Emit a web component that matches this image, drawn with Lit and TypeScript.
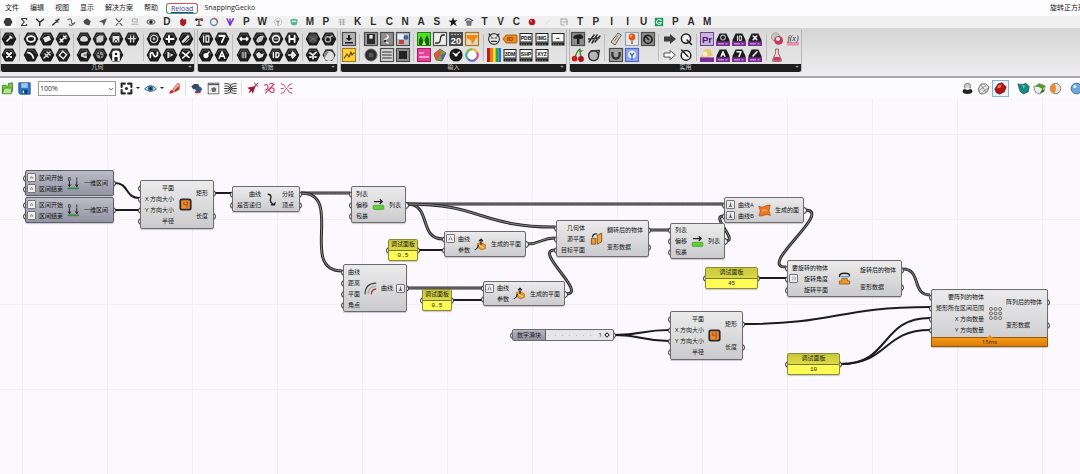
import { LitElement, html, svg, css, nothing, type SVGTemplateResult } from "lit";
import { customElement, property } from "lit/decorators.js";
import { classMap } from "lit/directives/class-map.js";

type Art = SVGTemplateResult;

/* ---------- icon drawing helpers, all on a 16 x 16 box ---------- */

const icon = (art: Art, cls = "i16") =>
  html`<svg class=${cls} viewBox="0 0 16 16" aria-hidden="true">${art}</svg>`;

const line = (d: string, c = "#fff", w = 1.6): Art =>
  svg`<path d=${d} fill="none" stroke=${c} stroke-width=${w} stroke-linecap="round" stroke-linejoin="round"></path>`;
const fill = (d: string, c = "#fff"): Art => svg`<path d=${d} fill=${c}></path>`;

const hex = (glyph: Art): Art => svg`
  <path d="M1.4 8 4.6 2.2H11.4L14.6 8 11.4 13.8H4.6Z" fill="#1c1c1c" stroke="#1c1c1c" stroke-width="1.4" stroke-linejoin="round"></path>
  <path d="M2.8 7.4 5.4 3.2H10.6L12.8 7" fill="none" stroke="#6d6d6d" stroke-width=".7"></path>${glyph}`;

const tile = (glyph: Art, bg = "#9b9b9b", edge = "#4c4c4c"): Art => svg`
  <rect x="1.5" y="1.5" width="13" height="13" fill=${bg} stroke=${edge} stroke-width="1.2"></rect>${glyph}`;

const label = (t: string, size: number, c: string, y = 11): Art =>
  svg`<text x="8" y=${y} text-anchor="middle" font-family="Liberation Sans, sans-serif" font-weight="700" font-size=${size} fill=${c}>${t}</text>`;

const card = (t: string): Art => svg`
  <rect x="2" y="2.5" width="12" height="8.5" fill="#f4f4f4" stroke="#222" stroke-width="1"></rect>
  ${label(t, 5, "#111", 8.6)}
  <path d="M1.5 13H14.5" stroke="#222" stroke-width="3"></path><path d="M3.5 12.4V14.4M6 12.4V14.4M8.5 12.4V14.4M11 12.4V14.4" stroke="#999" stroke-width=".7"></path>`;

const legacy = (glyph: Art): Art => svg`
  <path d="M1.5 9 4.6 2.4H11.4L14.5 9V11H1.5Z" fill="#1c1c1c"></path>
  <rect x="1" y="10.4" width="14" height="4.6" fill="#7a2d94"></rect>
  <path d="M3 12.8H9M10.5 12.8H12.5" stroke="#d9b6e6" stroke-width="1"></path>${glyph}`;

/* ---------- ribbon content ---------- */

interface RibbonPanel { name: string; cls: string; groups: Art[][]; }

const panels: RibbonPanel[] = [
  {
    name: "几何", cls: "p1",
    groups: [
      [hex(line("M6 10 10 6M9 5.4 10.8 7")), hex(line("M6 6 10 10M10 6 6 10", "#fff", 2))],
      [
        hex(svg`<ellipse cx="8" cy="8" rx="4" ry="2.8" fill="none" stroke="#fff" stroke-width="1.7"></ellipse>`),
        hex(fill("M4 7 10 4.6 12 9 6 11.4Z", "#e8e8e8")),
        hex(line("M5 11 11 5M5.4 8.4 7.6 10.6M8.6 5.2 10.8 7.4")),
        hex(line("M5 5.6Q9 6 10.4 11", "#fff", 1.8)),
        hex(line("M5 11 11 5M6 7 9 10M8 5 11 8", "#d5d5d5")),
        hex(svg`<rect x="5.4" y="5.4" width="5.2" height="5.2" transform="rotate(40 8 8)" fill="none" stroke="#eee" stroke-width="1.4"></rect>`),
      ],
      [
        hex(fill("M4 9.6Q4 5 8 5T12 9.6Q8 12 4 9.6", "#dadada")),
        hex(fill("M4.4 6.4 7 4.6H11.4V9.6L9 11.4H4.4Z", "#cfcfcf")),
        hex(svg`${fill("M4.6 5H11.4V11.4H4.6Z", "#e5e5e5")}${line("M6 11Q8 5 10 11", "#333", 1)}`),
        hex(line("M4.4 7.6H11.6M6.6 5V11M9.6 5V11", "#ddd", 1.4)),
        hex(svg`${fill("M10.8 4.4V11.6L5 9.4V6.6Z", "#dcdcdc")}${line("M8 8H10.8", "#333", 1)}`),
        hex(svg`<circle cx="8" cy="8" r="3.6" fill="#8c8c8c"></circle>${line("M5 7 11 9M7 4.8 9 11", "#222", .8)}`),
        hex(svg`${fill("M4.2 14V6.4Q4.2 3.6 8 3.6T11.8 6.4V14H9.6V10H6.4V14Z", "#fff")}<circle cx="8" cy="7" r="1.3" fill="#222"></circle>`),
      ],
      [
        hex(svg`<circle cx="8" cy="8" r="3.6" fill="none" stroke="#ccc" stroke-width="1.4"></circle><circle cx="8" cy="8" r="1.4" fill="#bbb"></circle>`),
        hex(line("M4.4 8H11.6M7 5V11", "#fff", 2)),
        hex(svg`${line("M5 10.6 10 5.4", "#ddd", 2.6)}${line("M8 11.4 11.4 8", "#ddd", 1)}`),
        hex(line("M4.4 10.6V7Q6 4 7.4 7.6T11.4 8.4V5.2")),
        hex(svg`${fill("M5.4 4.4 11.4 8 5.4 11.6Z", "#e6e6e6")}${line("M8 6V10", "#333", 1)}`),
        hex(line("M4.8 5.6 11 10.4M11 5 8 8 4.8 11", "#fff", 1.7)),
      ],
    ],
  },
  {
    name: "初始", cls: "p2",
    groups: [
      [
        hex(line("M5.6 5V11M8 5H10.8V11H8Z", "#eee", 1.3)), hex(line("M5.4 5H10.6L7.8 11.2", "#fff", 1.8)),
        hex(svg`<circle cx="8" cy="8.6" r="2.6" fill="#fff"></circle>${line("M8 8.6 11 5")}`), hex(line("M5.2 11.2 8 4.8 10.8 11.2M6.4 9.2H9.6", "#fff", 1.5)),
      ],
      [
        hex(line("M4 8H12M5.4 6.6 4 8 5.4 9.4M10.6 6.6 12 8 10.6 9.4", "#fff", 1.5)), hex(fill("M4 10Q6 4 12 5L10 10 6 12Z", "#c9c9c9")),
        hex(svg`<circle cx="8" cy="8" r="3.4" fill="none" stroke="#eee" stroke-width="1.6"></circle>${line("M6.6 8H9.4", "#eee", 1)}`), hex(line("M5.4 5V11M10.6 5V11M5.4 8H10.6", "#fff", 1.8)),
        hex(line("M5.6 6H10.4M5.6 8H10.4M5.6 10H10.4M7 5V11M9.4 5V11", "#bbb", .9)), hex(fill("M4 7 7 4.8 9 7 12 6.4 10.6 10 7 11.6 5 10Z", "#e4e4e4")),
        hex(line("M5.4 5.4V10.6M8 5.4Q11.6 5.4 11 8T8 10.6Z", "#eee", 1.5)), hex(line("M4.6 8H11.4M8.6 5 11.4 8 8.6 11M8 6V10", "#fff", 1.5)),
      ],
      [
        hex(svg`<circle cx="8" cy="8" r="4.4" fill="#4a4a4a"></circle>${line("M5 6 11 10M5 10 11 6", "#777", .8)}`), hex(svg`<circle cx="7" cy="8.4" r="2.6" fill="none" stroke="#aaa" stroke-width="1.4"></circle>${line("M9 7Q10 4.6 11.4 5", "#ccc", 1.2)}`),
        hex(line("M5 6 8 8 11 5.4M8 8V11.6M5 10H6M10 10H11", "#e2e2e2", 1.9)), svg`<path d="M1.4 8 4.6 2.2H11.4L14.6 8 11.4 13.8H4.6Z" fill="#3a3a3a"></path><circle cx="8" cy="9" r="5" fill="#dedede"></circle><path d="M8 4A5 5 0 0 0 3.6 11.4Z" fill="#888"></path>`,
      ],
    ],
  },
  {
    name: "输入", cls: "p3",
    groups: [
      [
        tile(fill("M7 4H9V7H11.4L8 10 4.6 7H7ZM4 11H12V12.4H4Z", "#1c1c1c"), "#b5b5b5"),
        tile(line("M3.4 11 6 7 8 10 10 5 11 8 13 6", "#7a4a00", 1.3), "#ffd33c", "#a77b12"),
      ],
      [
        tile(svg`<rect x="4" y="3" width="8" height="10" fill="#2a2a2a"></rect><rect x="6.4" y="4" width="3.2" height="3.6" fill="#eee"></rect>`),
        tile(svg`${line("M8 4Q11 6 7 8T9 12", "#eee", 1.5)}<circle cx="6" cy="10" r="1.3" fill="#333"></circle>`, "#8d8d8d"),
        tile(svg`<rect x="2.6" y="3" width="6" height="5" fill="#e9eef7"></rect><circle cx="11" cy="6.4" r="2.4" fill="#3a68a8"></circle><path d="M4 9H9V13H4Z" fill="#c2463a"></path>`, "#b9bdc9"),
        svg`<circle cx="8" cy="8" r="6" fill="#2c2c2c" stroke="#666"></circle><circle cx="8" cy="8" r="2.6" fill="#555"></circle>`,
        tile(line("M3.6 5H12.4M3.6 8H12.4M3.6 11H12.4", "#333", 1.2), "#d5d5d5"),
        tile(svg`<rect x="4" y="4" width="8" height="8" fill="#222"></rect>`, "#8e8e8e"),
      ],
      [
        svg`<rect x="1.5" y="1.5" width="13" height="13" fill="#4be32a" stroke="#2b7a1c"></rect>${fill("M3 14V9L5 5 7 9 8 11 9 8 11 4 13 8V14Z", "#17620f")}${fill("M6 14 8 9 10 14Z", "#c8ff70")}`,
        tile(line("M3.6 12H6Q8 12 8.4 8T11 4H12.4", "#222", 1.3), "#ededed"),
        svg`<rect x="1" y="1" width="14" height="14" fill="#4a4a4a"></rect><path d="M3 3.4H13" stroke="#bbb" stroke-dasharray="2 1"></path>${label("20", 9.4, "#fff", 13)}`,
        tile(svg`<path d="M2.6 4H13.4V7Q11 7 10.6 10L8 13.4 7 9Q5 9 2.6 7Z" fill="#f08a13"></path>`, "#e9d8b9", "#a5762c"),
        svg`<rect x="1.5" y="1.5" width="13" height="13" fill="#ea3f97" stroke="#a31d60"></rect><path d="M3 10H13M3 6H8" stroke="#ffc1e0" stroke-width="1.4"></path>`,
        svg`<path d="M2 7 8 2 14 6 10 14 4 13Z" fill="#69a83d" stroke="#4c4c4c" stroke-width=".7"></path><path d="M2 7 8 2 9 8 4 13Z" fill="#d75a3c"></path><path d="M9 8 14 6 10 14Z" fill="#5d55b8"></path>`,
        svg`<circle cx="8" cy="8" r="6.6" fill="#181818"></circle>${line("M8 8 5 6M8 8 11.4 5", "#fff", 1.3)}<circle cx="8" cy="8" r="1.6" fill="#fff"></circle>`,
        svg`<g fill="none" stroke-width="2.2"><path d="M8 2.4A5.6 5.6 0 0 1 13 5.4" stroke="#efb02d"></path><path d="M13 5.4A5.6 5.6 0 0 1 11.6 12.3" stroke="#d64b86"></path><path d="M11.6 12.3A5.6 5.6 0 0 1 4 12" stroke="#5564c9"></path><path d="M4 12A5.6 5.6 0 0 1 3 5.4" stroke="#3bb6a3"></path><path d="M3 5.4A5.6 5.6 0 0 1 8 2.4" stroke="#72bd3c"></path></g><circle cx="8" cy="8" r="4.4" fill="#fff"></circle>`,
      ],
      [
        svg`<circle cx="8" cy="8" r="5.4" fill="#e7e7e7" stroke="#3a3a3a" stroke-width="1.2"></circle>${line("M3 3 5 5M13 3 11 5M5.4 7H7M9 7H10.6M5.6 10.4H10.4", "#333", 1.2)}`,
        svg`<path d="M4 4H14Q15 4 15 5V11Q15 12 14 12H4L1 8Z" fill="#ef8a1d" stroke="#9a5206" stroke-width=".8"></path>${label("ID", 6, "#7a3d00", 10.2)}`,
        card("PDB"), card("IMG"), card("▪▪"),
        svg`<path d="M1 1H4V15H1Z" fill="#b5211a"></path><path d="M4 1H7V15H4Z" fill="#f0781a"></path><path d="M7 1H9.6V15H7Z" fill="#f5e12c"></path><path d="M9.6 1H12.4V15H9.6Z" fill="#31a446"></path><path d="M12.4 1H15V15H12.4Z" fill="#2676c9"></path>`,
        card("3DM"), card("SHP"), card("XYZ"),
      ],
    ],
  },
  {
    name: "实用", cls: "p4",
    groups: [
      [
        tile(svg`<path d="M7 13V8L3.4 7.6Q2.6 4 8 3.4T13 7.6L9.4 8V13Z" fill="#1f1f1f"></path>`, "#8b8b8b"), svg`${line("M3 11 8 4M6 12 11 4M9 11 14 5M2.6 8 13 7", "#2c2c2c", 1.5)}`,
        svg`${line("M5 11Q6 5 10 2Q10 7 11.4 11", "#3f7a26", 1.3)}<circle cx="4.6" cy="11.6" r="2.9" fill="#c81f24"></circle><circle cx="11" cy="12" r="2.9" fill="#a81218"></circle><path d="M8 3 13.6 3.6 10 6Z" fill="#4e9a31"></path>`,
        svg`<circle cx="7.6" cy="8.6" r="5" fill="#b6b6b6" stroke="#333" stroke-width="1.4"></circle>${line("M5 4 13.4 3.4 12.4 8", "#333", 1.4)}`,
      ],
      [
        svg`<path d="M3 11 10 2 13.4 4 7 14Z" fill="#d9d3c6" stroke="#66604f"></path>${line("M6.6 10 10 5", "#7a7466", 1)}`,
        tile(svg`<circle cx="8" cy="6" r="3.4" fill="#e8581b"></circle><circle cx="7" cy="5" r="1" fill="#ffd6b8"></circle><path d="M7.4 9.4H8.6V13H7.4Z" fill="#555"></path>`, "#f2e7dc", "#8ba7c8"),
        tile(svg`<circle cx="8" cy="8.4" r="4" fill="none" stroke="#222" stroke-width="1.8"></circle>${line("M5 5 8.6 8.6", "#222", 1.5)}`, "#8f8f8f"),
        tile(svg`<path d="M4.4 5V8A3.6 3.6 0 0 0 11.6 8V5" fill="none" stroke="#333" stroke-width="2.4"></path>`, "#a3a3a3"),
        tile(svg`<circle cx="8" cy="7.6" r="3.8" fill="#f3f7ff"></circle><path d="M6 6 8 8.4 10 6M8 8.4V13" fill="none" stroke="#4a66c0" stroke-width="1.4"></path>`, "#8fa8ea", "#5068bc"),
      ],
      [
        fill("M2 5.6H8V3L14 8 8 13V10.4H2Z", "#3c3c3c"), svg`<circle cx="8" cy="7.6" r="4.6" fill="#f4f4f4" stroke="#222" stroke-width="1.5"></circle>${line("M9 9 13.4 13.4", "#222", 1.6)}`,
        svg`<path d="M2 6H8V3.4L13.4 8 8 12.6V10H2Z" fill="#fff" stroke="#444" stroke-width=".9"></path>`, svg`<circle cx="8" cy="8.4" r="4.8" fill="#f4f4f4" stroke="#222" stroke-width="1.5"></circle>${line("M3.6 3 10 9.6", "#222", 1.4)}`,
      ],
      [
        svg`<rect x="1.5" y="1.5" width="13" height="13" fill="#c9b6dc" stroke="#6d4390"></rect>${label("Pr", 9.6, "#4b1676", 11.6)}`,
        legacy(svg`<circle cx="8" cy="6.6" r="2.4" fill="none" stroke="#aaa" stroke-width="1.2"></circle>`), legacy(line("M6.4 5V9.4M8.6 5H10.4V9.4H8.6Z", "#eee", 1)), legacy(line("M6.2 5 9.8 8.8M9.8 5 6.2 8.8", "#fff", 1.5)),
        svg`<rect x="1" y="10.4" width="14" height="4.6" fill="#7a2d94"></rect><path d="M2 10 5 3 11 2 14 9Z" fill="#f0c46a"></path><circle cx="6" cy="7" r="2.4" fill="#fff1d4"></circle>`,
        legacy(line("M6 9.4 8 4.6 10 9.4M7 7.8H9", "#fff", 1.2)), legacy(line("M6 4.8H10L8 9.4", "#fff", 1.5)), legacy(line("M6 9 10 4.8", "#fff", 1.5)),
      ],
      [
        svg`<circle cx="6.6" cy="6" r="4.2" fill="#c5c5c5" stroke="#888" stroke-width=".6"></circle><circle cx="9.6" cy="9.4" r="4.4" fill="#c5385b"></circle><circle cx="9" cy="8" r="2" fill="#f1ecee"></circle>`,
        svg`<path d="M2 11H14V14.6H2Z" fill="#e591ab"></path><text x="8" y="9.6" text-anchor="middle" font-family="Liberation Serif, serif" font-style="italic" font-size="8" fill="#222">f(x)</text>`,
        svg`<path d="M6.6 2H9.4V6L12.6 13.4Q12.8 14.4 11.8 14.4H4.2Q3.2 14.4 3.4 13.4L6.6 6Z" fill="#f3d6dd" stroke="#8a4455" stroke-width=".8"></path><path d="M5.2 10H10.8L12.2 13.8H3.8Z" fill="#cf3a5e"></path>`,
      ],
    ],
  },
];

/* how many tiles of each group sit in the upper row */
const topCount: Record<string, number[]> = { p1: [1, 3, 4, 3], p2: [2, 4, 2], p3: [1, 3, 4, 5], p4: [2, 3, 2, 4, 2] };

/* ---------- tab strip ---------- */

const tabs: (string | Art)[] = [
  fill("M2 8 5 2.8H11L14 8 11 13.2H5Z", "#3b3b3b"),
  line("M11.4 5V3.4H4.6L8.4 8 4.6 12.6H11.4V11", "#3a3a3a", 1.5),
  svg`${line("M3.4 4.4 7.6 8.4 12.6 4.4M7.6 8.4V12.6", "#333", 2)}`,
  line("M3.6 12 12 4M8 5.6 10.6 8", "#333", 2),
  line("M4 5Q9 2 8.6 7T13 9Q10 14 5.6 11.6", "#666", 1.6),
  fill("M3 7 8 3 13 7 11 12.6 5 11Z", "#4a4a4a"),
  fill("M2.6 7.4 13.4 3 9 13.4 7.6 9Z", "#505050"),
  line("M4 3.6 12 12.4M12 3.6 4 12.4", "#555", 1.4),
  line("M5 4H11V8H5ZM4 11H12", "#aaa", 1.3),
  svg`<ellipse cx="8" cy="8" rx="5.4" ry="3" fill="#c7c7c7" stroke="#444"></ellipse><circle cx="8" cy="8" r="2.2" fill="#222"></circle>`,
  "D",
  fill("M4 6 7 2.6 9 5 12 4 12.4 10 9 13.6 4.6 12Z", "#a51c22"),
  svg`${line("M4 4.4 12 4M8 4.4V12M5 12.4H11", "#444", 1.6)}<circle cx="11.6" cy="5" r="2" fill="#c02a2a"></circle><circle cx="4.6" cy="5" r="1.6" fill="#222"></circle>`,
  svg`<circle cx="8" cy="8" r="4.6" fill="none" stroke="#688fb5" stroke-width="2"></circle><path d="M8 3.4A4.6 4.6 0 0 1 12.6 8" fill="none" stroke="#c05a4a" stroke-width="2"></path>`,
  svg`${line("M4 3.6 8 12.4 12.4 3.6M8 4V9", "#7438c9", 2)}`,
  "P", "W",
  svg`<circle cx="8" cy="8" r="4.8" fill="none" stroke="#999" stroke-dasharray="1.6 1"></circle>${line("M6 7H10M8 7V11", "#888", 1.3)}`,
  svg`<path d="M3 5Q8 2 13 5L12 11Q8 14 4 11Z" fill="#58b59a"></path><path d="M5 7H11" stroke="#d7fff2" stroke-width="1.4"></path>`,
  "M", "P",
  line("M4 5H12M4 8H12M5 11H11M6 4V12M10 4V12", "#999", .9),
  "K", "L", "C", "N", "A", "S",
  fill("M8 1.6 9.8 6 14 5.4 10.8 8.6 13 13.4 8.4 10.6 4.4 14 5.6 9 2 6.4 6.6 6Z", "#1b1b1b"),
  svg`<path d="M4 6H12L11 13H5Z" fill="#777"></path>${line("M3 6Q5 2.6 8 3.6T13 6", "#555", 1.5)}`,
  "T", "V", "C",
  svg`<circle cx="8" cy="8" r="4.4" fill="#b01c26"></circle><circle cx="6.8" cy="6.6" r="1.3" fill="#e3838a"></circle>`,
  line("M5 11 11 5", "#dcdcdc", 1.4),
  line("M4 4H12V12M4 4V12H8M6 8H12", "#a5a5a5", 1.3),
  "T", "P", "I", "I", "U",
  svg`<rect x="2.4" y="2.4" width="11.2" height="11.2" fill="#1f9a63"></rect>${line("M11 6Q8 3.4 5.4 6.4T8 11.4Q11 11 11 8.6H8", "#eafff4", 1.4)}`,
  "P", "A", "M",
];

/* ---------- canvas toolbar ---------- */

const tb: Record<string, Art> = {
  open: svg`<path d="M1.6 14V4H6.4L8 5.4H9V2L14 1V12" fill="#7fc943" stroke="#2f7c1c" stroke-width="1"></path><path d="M1.6 14.4 4 7.4H13.6L12.6 14.4Z" fill="#b6e68a" stroke="#2f7c1c"></path>`,
  save: svg`<path d="M1 1H15V15H2.6L1 13.4Z" fill="#2e78cf" stroke="#174b8f"></path><rect x="4" y="1.4" width="8" height="5.8" fill="#9cc6f2"></rect><rect x="4.6" y="9.4" width="7" height="5" fill="#123a6e"></rect><rect x="5.6" y="10.4" width="2" height="3.4" fill="#d9e6f6"></rect>`,
  extents: svg`${line("M2 6V2H6M10 2H14V6M14 10V14H10M6 14H2V10", "#2a2a2a", 2.6)}<circle cx="8" cy="8" r="1.9" fill="#2a2a2a"></circle>`,
  eye: svg`<path d="M.8 8.4Q8 .8 15.2 8.4 8 14.6.8 8.4Z" fill="#e5eef5" stroke="#35556e" stroke-width="1.2"></path><circle cx="8" cy="8" r="3.6" fill="#2f79ad"></circle><circle cx="8" cy="8" r="1.6" fill="#0f2436"></circle>`,
  pen: svg`<path d="M1.4 14Q2 10 5 9.4L8 12Q5 15 1.4 14Z" fill="#d22b2b"></path><path d="M6 8.6 12 1.6 14.6 3 13.6 9 8.6 12Z" fill="#e9b89a" stroke="#9d4234" stroke-width=".8"></path><path d="M8 10 13 5 14 9 9 12Z" fill="#c3332c"></path>`,
  cluster: svg`<path d="M1.6 5.4 5 2.6H10L12 6 9 9H4Z" fill="#38495c"></path><path d="M6 8 9 6H13L15 9 12 13H8Z" fill="#2b5687"></path><path d="M6 11.6Q9 14.6 13.4 12" fill="none" stroke="#c2283c" stroke-width="1.7"></path>`,
  window: svg`<rect x="1.4" y="1.4" width="13.2" height="13.2" fill="#f2f2f2" stroke="#555"></rect><path d="M1.4 3H14.6" stroke="#555" stroke-width="1.8"></path><path d="M5 8 9 6 11.4 8 10.6 12 6.4 12.4Z" fill="#6b6b6b"></path>`,
  wires: svg`${line("M1 2H4Q8 2 8 5T12 8H15M15 2H12Q8 2 8 5T4 8H1M1 8H4Q8 8 8 11T12 14H15M15 8H12Q8 8 8 11T4 14H1M1 5H5L11 11H15M15 5H11L5 11H1", "#2a2a2a", 1.1)}`,
  cut: svg`<path d="M1.4 7 12 5 8.4 14.4 6.8 11 3 14 5 9.4Z" fill="#9c1c34"></path>${line("M10.4 1.4 14.6 5.4M14.6 1.4 10.4 5.4", "#9c1c34", 1.2)}`,
  swirl: line("M2 4Q5 1.6 6 5T2.6 10M13.6 2.6 3 13.6M10 7Q14 7 13.6 10.6T9.4 12 10 7M8 2.6Q11 1 13 3", "#d32552", 1.3),
  scatter: svg`${line("M1.4 2Q5.6 2.4 6.4 6M14.6 2Q10.4 2.4 9.6 6M1.4 14Q5.6 13.6 6.4 10M14.6 14Q10.4 13.6 9.6 10M1.4 8H4M12 8H14.6", "#d63a63", 1.2)}${line("M7 7 9 9M9 7 7 9", "#d63a63", 1)}`,
  ghost: svg`<circle cx="8" cy="5.4" r="3.8" fill="#cfcfcf" stroke="#666"></circle><ellipse cx="8" cy="11.4" rx="6" ry="3.4" fill="#242424"></ellipse><ellipse cx="8" cy="8.4" rx="3.4" ry="1.4" fill="#eee"></ellipse>`,
  mesh: svg`<path d="M1.4 8.6 5 2.4H10.6L14.8 6 13 11.4 8 14.6H4Z" fill="#e6e6e6" stroke="#555"></path>${line("M3 10 11 4M6 13 13 8M5 4 11 12", "#777", .9)}`,
  gem: svg`<path d="M1 8.6 5 2.4 10 1 15 6 12.8 12 7 15 2.6 13Z" fill="#b11616" stroke="#6b0b0b" stroke-width=".8"></path><path d="M5 4 9.6 3 8 7 4 8Z" fill="#f0685e"></path>`,
  teal: svg`<path d="M1 2.4 7 3 11 1.6 15 5.6 14 12 8 14.8 4 12Z" fill="#148a80" stroke="#0a5750" stroke-width=".8"></path><path d="M6 4.4 10 4.4 8.4 8Z" fill="#69d2c3"></path>`,
  green: svg`<path d="M1 6 8 2 15 5 14 11 8 14.8 3 12.6Z" fill="#eee" stroke="#555" stroke-width=".8"></path><path d="M2 5.4 8 2 15 5 12 9 7 6Z" fill="#4e9e1e"></path><path d="M8 14.4 14 11 12 8Z" fill="#35701a"></path>`,
  half: svg`<circle cx="8" cy="8" r="6.4" fill="#e5e1dc" stroke="#6a5a4c" stroke-width=".9"></circle><path d="M7 2A6 6 0 0 0 7 14Q10 8 7 2Z" fill="#e88b3a"></path>`,
  blue: svg`<circle cx="8" cy="8" r="6.6" fill="#6ba8dd" stroke="#28547d"></circle><circle cx="6" cy="5.6" r="2" fill="#d4eaff"></circle>`,
};

/* ---------- component glyphs ---------- */

const glyphs: Record<string, Art> = {
  domain: svg`${line("M3 5.6V12M12 5.6V12", "#222", 1.2)}${line("M1.6 9.6 3 12 4.4 9.6M10.6 9.6 12 12 13.4 9.6", "#222", 1.2)}${line("M1.6 14H14", "#2f8f45", 2)}<rect x="2" y="1" width="2" height="3" fill="none" stroke="#222" stroke-width=".8"></rect>${line("M12 1V4", "#222", 1)}`,
  rect: svg`<rect x="1.6" y="1.6" width="12.8" height="12.8" rx="2" fill="#f08b35" stroke="#2a2a33" stroke-width="2.2"></rect>${line("M6 5V8.4H10V11.4M9 5H10.4V7", "#b44a00", 1.3)}`,
  segment: line("M4 1.6Q8.6 2.4 7 6.6T9.4 13.6Q11 14.6 12.6 12M8 14.4H12", "#222", 1.7),
  shift: svg`${line("M3 4.4H12M10 2 12.6 4.4 10 6.8", "#222", 1.6)}<rect x="1.4" y="9" width="13.2" height="5" rx="1" fill="#5fcf35" stroke="#3a9420" stroke-width=".8"></rect>`,
  frame: svg`<path d="M4 7 8 5.4 14 8.4V13L9 14.6 5 12Z" fill="#f09a2c" stroke="#a65b0a" stroke-width=".8"></path>${line("M8.6 8V1.4M6.6 3.4 8.6 1.4 10.6 3.4M1.4 14.4Q4.6 13 5.4 9", "#222", 1.5)}${line("M7 9.6 12 12", "#fff3d9", 1)}`,
  offset: svg`${line("M1.4 14.6Q1.4 2 14.6 1.4", "#444", 1.5)}${line("M5 14.6Q5 6 14.6 5", "#a5a5a5", 1.5)}${line("M9 14.6Q9 9.6 14.6 8.6", "#a63a3a", 1.6)}`,
  orient: svg`<path d="M1.6 8H7V15H1.6Z" fill="#f29a2c" stroke="#6b3c05" stroke-width=".9"></path><path d="M9 4 14.4 1.4V12L9 15Z" fill="#f2a53c" stroke="#6b3c05" stroke-width=".9"></path>${line("M3 6Q4 2 8 2.4", "#222", 1.5)}`,
  ruled: svg`<path d="M1 3Q5 5 8 3T15 1.4Q12 8 15.2 14Q11 12 8 13.6T1.4 14.6Q4.6 8 1 3Z" fill="#f2761b" stroke="#a9480a" stroke-width=".9"></path>${line("M5.6 8Q8 7 11 8", "#ffd0a0", 1)}`,
  rotate: svg`${line("M2 5.6Q1 1.6 8 1.6T14 4.6", "#222", 1.9)}${line("M4.6 5.6H12.6", "#4b9dcf", 1.6)}<path d="M4.6 8H11.4V11H14.4V14.8H1.6V11H4.6Z" fill="#f2982a" stroke="#7a4508" stroke-width=".8"></path>`,
  array: svg`<g fill="#eee" stroke="#444" stroke-width="1">${[2.4, 8, 13.6].map(y => [2.4, 8, 13.6].map(x => svg`<rect x=${x - 1.6} y=${y - 1.6} width="3.2" height="3.2" rx=".8"></rect>`))}</g>`,
};

const marks: Record<string, Art> = {
  x: svg`<path d="M5.4 11V8L8 5 10.6 8V11M5.4 9H10.6" fill="none" stroke="#555" stroke-width="1.2"></path>`,
  curve: svg`<path d="M3.6 11.4H5Q6 4.6 8 4.6T11 11.4H12.4" fill="none" stroke="#333" stroke-width="1.3"></path>`,
  down: svg`<path d="M8 3.6V11M5 8.4 8 11.4 11 8.4M4 12.6H12" fill="none" stroke="#222" stroke-width="1.4"></path>`,
  deg: svg`<path d="M4 5H7V11H4M9 4.6H12V11.4H9" fill="none" stroke="#777" stroke-width="1.2"></path>`,
};

/* ---------- graph data ---------- */

/* graph-space row shown at the top edge of the viewport */
const PAN_Y = 98;

interface Port { t: string; m?: string; }
interface GraphNode {
  x: number; y: number; w: number; h: number; ins: Port[]; outs: Port[]; g: string;
  dark?: boolean; time?: string;
}
const P = (...names: string[]): Port[] => names.map(n => {
  const [t, m] = n.split("|");
  return { t, m };
});

const nodes: GraphNode[] = [
  { x: 25, y: 170, w: 89, h: 26, ins: P("区间开始|x", "区间结束|x"), outs: P("一维区间"), g: "domain", dark: true },
  { x: 25, y: 197, w: 89, h: 26, ins: P("区间开始|x", "区间结束|x"), outs: P("一维区间"), g: "domain", dark: true },
  { x: 140, y: 180, w: 74, h: 49, ins: P("平面", "X 方向大小", "Y 方向大小", "半径"), outs: P("矩形", "长度"), g: "rect" },
  { x: 232, y: 186, w: 68, h: 26, ins: P("曲线", "是否递归"), outs: P("分段", "顶点"), g: "segment" },
  { x: 351, y: 186, w: 55, h: 37, ins: P("列表", "偏移", "包裹"), outs: P("列表"), g: "shift" },
  { x: 444, y: 231, w: 82, h: 26, ins: P("曲线|curve", "参数"), outs: P("生成的平面"), g: "frame" },
  { x: 343, y: 264, w: 64, h: 48, ins: P("曲线", "距离", "平面", "角点"), outs: P("曲线|down"), g: "offset" },
  { x: 483, y: 281, w: 82, h: 25, ins: P("曲线|curve", "参数"), outs: P("生成的平面"), g: "frame" },
  { x: 556, y: 220, w: 93, h: 37, ins: P("几何体", "源平面", "目标平面"), outs: P("翻转后的物体", "变形数据"), g: "orient" },
  { x: 724, y: 197, w: 80, h: 26, ins: P("曲线A|down", "曲线B|down"), outs: P("生成的面"), g: "ruled" },
  { x: 670, y: 223, w: 55, h: 36, ins: P("列表", "偏移", "包裹"), outs: P("列表"), g: "shift" },
  { x: 787, y: 260, w: 115, h: 37, ins: P("要旋转的物体", "旋转角度|deg", "旋转平面"), outs: P("旋转后的物体", "变形数据"), g: "rotate" },
  { x: 931, y: 289, w: 117, h: 58, ins: P("要阵列的物体", "矩形所在区间范围", "X 方向数量", "Y 方向数量"), outs: P("阵列后的物体", "变形数据"), g: "array", time: "15ms" },
  { x: 670, y: 311, w: 73, h: 49, ins: P("平面", "X 方向大小", "Y 方向大小", "半径"), outs: P("矩形", "长度"), g: "rect" },
];

const notes = [
  { x: 388, y: 239, w: 30, h: 22, v: "0.5" },
  { x: 422, y: 289, w: 30, h: 22, v: "0.5" },
  { x: 705, y: 267, w: 53, h: 22, v: "45" },
  { x: 787, y: 353, w: 53, h: 22, v: "10" },
];

/* x1, y1, x2, y2, carries a list */
type Wire = [number, number, number, number, boolean];
const wires: Wire[] = [
  [115, 183, 139, 198, false], [115, 210, 139, 210, false], [215, 193, 231, 193, false],
  [301, 193, 350, 193, true], [301, 193, 342, 271, true],
  [407, 204, 723, 204, true], [407, 204, 443, 239, true], [407, 204, 555, 227, true],
  [419, 250, 443, 250, false], [408, 288, 482, 288, true], [453, 300, 482, 300, false],
  [527, 244, 555, 238, true], [566, 294, 555, 250, true], [650, 230, 669, 230, true],
  [726, 241, 723, 216, true], [805, 210, 786, 267, true], [759, 278, 786, 278, false],
  [903, 269, 930, 295, true], [744, 324, 930, 307, false],
  [841, 364, 930, 318, false], [841, 364, 930, 330, false],
  [615, 335, 669, 330, false], [615, 335, 669, 341, false],
];

const wirePath = ([x1, y1, x2, y2]: Wire) => {
  const dx = x2 - x1;
  const dy = y2 - y1;
  const k = Math.max(dx / 2, Math.hypot(dx, dy) / 2);
  const a = y1 - PAN_Y;
  const b = y2 - PAN_Y;
  return `M${x1} ${a}C${x1 + k} ${a} ${x2 - k} ${b} ${x2} ${b}`;
};

const reset = css`
  * { box-sizing: border-box; }
  svg { display: block; flex: none; }
  button { appearance: none; border: 0; padding: 0; margin: 0; background: none; font: inherit; color: inherit; display: block; }
`;

@customElement("menu-bar")
export class MenuBar extends LitElement {
  static styles = [reset, css`
    :host { display: block; }
    nav { display: flex; align-items: center; height: 16px; gap: 11px; padding-left: 5px; background: #fdfcfe; overflow: hidden; }
    button { white-space: nowrap; line-height: 12px; }
    .reload { position: relative; color: #3d3fae; text-decoration: underline; padding: 0 4px; margin: 0 -5px 0 -3px; border: 1px solid #39a54a; border-top-color: #e0504c; border-right-color: #e0504c; border-radius: 3px; line-height: 9px; }
    .doc { margin-left: auto; width: 30px; white-space: nowrap; flex: none; }
  `];
  render() {
    return html`<nav>
      ${["文件", "编辑", "视图", "显示", "解决方案", "帮助"].map(m => html`<button>${m}</button>`)}
      <button class="reload">Reload</button>
      <button>SnappingGecko</button>
      <span class="doc">旋转正方形</span>
    </nav>`;
  }
}

@customElement("tool-ribbon")
export class ToolRibbon extends LitElement {
  static styles = [reset, css`
    :host { display: block; }
    .tabs { display: flex; height: 12px; background: #f1f0f1; }
    .strip { display: grid; grid-auto-flow: column; grid-auto-columns: 1fr; width: 715px; flex: none; }
    .tab { display: flex; align-items: center; justify-content: center; height: 12px; font: 700 10px/12px "Liberation Sans", sans-serif; color: #2c2c2c; }
    .tab.on { background: #fff; }
    .i12 { width: 12px; height: 12px; }
    .i16 { width: 16px; height: 16px; }
    .panels { display: flex; gap: 2px; height: 50px; padding-top: 1px; background: linear-gradient(#d5d5d6, #efedef); border-bottom: 2px solid #a9a9ab; }
    .panel { display: flex; flex-direction: column; height: 43px; background: linear-gradient(#d9d9d9, #e9e8e9); border: solid #b7b7b7; border-width: 0 1px; border-radius: 2px; flex: none; }
    .p1 { width: 195px; } .p2 { width: 141px; } .p3 { width: 227px; } .p4 { width: 233px; }
    .groups { flex: 1; display: flex; justify-content: space-between; padding: 2px 0 0; }
    .split { width: 1px; margin: 3px 0; background: #bdbdbd; }
    .row { display: flex; height: 16px; }
    .foot { display: grid; grid-template-columns: 8px 1fr 8px; height: 8px; border-radius: 0 0 2px 2px; background: #1e1e1e; color: #cfcfcf; font-size: 6px; line-height: 7px; text-align: center; }
    .name { grid-column: 2; }
  `];
  render() {
    return html`
      <div class="tabs"><div class="strip" role="tablist">
        ${tabs.map((t, i) => html`<button role="tab" aria-selected=${i === 0} class=${classMap({ tab: true, on: i === 0 })}>${typeof t === "string" ? t : icon(t, "i12")}</button>`)}
      </div></div>
      <div class="panels">
        ${panels.map(p => html`<section class="panel ${p.cls}">
          <div class="groups">
            ${p.groups.map((g, i) => {
              const n = topCount[p.cls][i];
              return html`${i ? html`<i class="split"></i>` : nothing}<div>
                ${[g.slice(0, n), g.slice(n)].map(r => html`<div class="row">${r.map(a => html`<button>${icon(a)}</button>`)}</div>`)}
              </div>`;
            })}
          </div>
          <div class="foot"><span class="name">${p.name}</span><span>+</span></div>
        </section>`)}
      </div>`;
  }
}

@customElement("canvas-toolbar")
export class CanvasToolbar extends LitElement {
  static styles = [reset, css`
    :host { display: block; }
    .bar { display: flex; align-items: center; justify-content: space-between; height: 20px; padding-left: 1px; background: #fcfbfd; overflow: hidden; }
    .side { display: flex; align-items: center; gap: 4px; flex: none; }
    .side.right { gap: 3px; width: 119px; }
    .right .sep { margin: 0 1px; }
    .i13 { width: 13px; height: 13px; }
    .zoom { position: relative; margin: 0 0 0 3px; }
    select { appearance: none; display: block; width: 78px; height: 15px; padding: 0 1px; border: 1px solid #9a9a9e; border-radius: 0; background: #fff; font: 7px/13px "Open Sans", sans-serif; color: #333; }
    .chev { position: absolute; right: 2px; top: 5px; width: 6px; height: 6px; }
    .drop { display: flex; align-items: center; gap: 3px; }
    .drop i { width: 0; border: 2px solid transparent; border-top-color: #222; border-bottom: 0; }
    .sep { width: 1px; height: 14px; background: #dedde1; }
    .pressed { padding: 1px; margin: 0 0 0 -1px; border: 1px solid #86b4d6; background: #eaf4fb; }
  `];
  private b(name: string, pressed = false) {
    return html`<button class=${classMap({ pressed })} aria-label=${name}>${icon(tb[name], "i13")}</button>`;
  }
  render() {
    return html`<div class="bar">
      <div class="side">
        ${this.b("open")}${this.b("save")}
        <div class="zoom">
          <select aria-label="zoom"><option>100%</option></select>
          <svg class="chev" viewBox="0 0 6 6" aria-hidden="true"><path d="M1 2 3 4 5 2" fill="none" stroke="#555" stroke-width=".8"></path></svg>
        </div>
        <span class="drop">${this.b("extents")}<i></i></span>
        <span class="drop">${this.b("eye")}<i></i></span>
        ${this.b("pen")}<i class="sep"></i>
        ${this.b("cluster")}${this.b("window")}${this.b("wires")}<i class="sep"></i>
        ${this.b("cut")}${this.b("swirl")}${this.b("scatter")}
      </div>
      <div class="side right">
        ${this.b("ghost")}${this.b("mesh")}${this.b("gem", true)}<i class="sep"></i>
        ${this.b("teal")}${this.b("green")}${this.b("half")}<i class="sep"></i>${this.b("blue")}
      </div>
    </div>`;
  }
}

@customElement("graph-node")
export class GraphNodeView extends LitElement {
  @property({ attribute: false }) node!: GraphNode;
  static styles = [reset, css`
    :host { display: block; }
    .box { display: flex; flex-direction: column; height: 100%; border: 1px solid #6c6c6e; border-radius: 2px; background: linear-gradient(#ebebec, #cbcbcd); box-shadow: 0 1px 1px #0003; color: #161616; }
    .dark { background: linear-gradient(#bcbcc8, #9393a3); border-color: #5f5f6b; }
    .main { flex: 1; display: flex; justify-content: space-between; align-items: stretch; padding: 1px 0; min-height: 0; }
    .col { display: flex; flex-direction: column; }
    .port { position: relative; flex: 1; display: flex; align-items: center; justify-content: flex-end; gap: 3px; padding: 0 4px; white-space: nowrap; line-height: 8px; }
    .out .port { justify-content: flex-start; padding-right: 5px; }
    .port::before { content: ""; position: absolute; z-index: -1; left: -3px; top: calc(50% - 3px); width: 5px; height: 5px; border: 1px solid #1d1d1d; border-radius: 50%; background: #fff; }
    .out .port::before { left: auto; right: -3px; }
    .mark { width: 9px; height: 9px; border: 1px solid #77777a; border-radius: 1px; background: #eeeeef; }
    .in .mark { margin: 0 auto 0 -3px; }
    .out .mark { margin-right: -4px; }
    .glyph { width: 13px; height: 13px; align-self: center; }
    .time { position: relative; height: 10px; margin: 0 -1px -1px; border: 1px solid #94560a; background: linear-gradient(#f39a1c, #dd7d05); line-height: 8px; text-align: center; color: #3c2200; }
    .time::before { content: ""; position: absolute; left: calc(50% - 3px); top: -3px; border: 3px solid transparent; border-top: 0; border-bottom-color: #ef9014; }
  `];
  private port(p: Port, out: boolean) {
    const m = p.m ? icon(marks[p.m], "mark") : nothing;
    return html`<div class="port">${out ? nothing : m}<span>${p.t}</span>${out ? m : nothing}</div>`;
  }
  render() {
    const n = this.node;
    return html`<div class=${classMap({ box: true, dark: !!n.dark })}>
      <div class="main">
        <div class="col in">${n.ins.map(p => this.port(p, false))}</div>
        ${icon(glyphs[n.g], "glyph")}
        <div class="col out">${n.outs.map(p => this.port(p, true))}</div>
      </div>
      ${n.time ? html`<div class="time">${n.time}</div>` : nothing}
    </div>`;
  }
}

@customElement("graph-canvas")
export class GraphCanvas extends LitElement {
  static styles = [reset, css`
    :host { display: block; position: relative; overflow: hidden; background-color: #fbf9fd; background-image: linear-gradient(#f2f0f4 1px, transparent 1px), linear-gradient(90deg, #f2f0f4 1px, transparent 1px); background-size: 100% 85px, 85px 100%; background-position: 0 36px, 22px 0; font-size: 6px; }
    .wires { position: absolute; inset: 0; width: 100%; height: 100%; fill: none; }
    .outer { stroke: #1c1c1c; stroke-width: 2; }
    .outer.list { stroke: #2a2a2a; stroke-width: 3; }
    .inner { stroke: #8c8c8c; stroke-width: 1; }
    .item { position: absolute; z-index: 0; }
    .note { display: flex; flex-direction: column; height: 100%; border: 1px solid #8b8a35; border-radius: 2px; background: #fdfb55; text-align: center; color: #222; white-space: nowrap; box-shadow: 0 1px 1px #0003; }
    .title { height: 11px; line-height: 9px; background: linear-gradient(#c9c83c, #dcd94a); border-bottom: 1px solid #77762c; }
    .value { line-height: 9px; font-family: "Liberation Mono", monospace; }
    .dots::before, .dots::after { content: ""; position: absolute; z-index: -1; top: calc(50% - 3px); width: 5px; height: 5px; border: 1px solid #1d1d1d; border-radius: 50%; background: #fff; }
    .dots::before { left: -2px; }
    .dots::after { right: -2px; }
    .slider { display: flex; align-items: center; width: 102px; height: 12px; border: 1px solid #6c6c6e; border-radius: 2px; background: #e6e6e8; line-height: 10px; }
    .slider label { width: 33px; flex: none; text-align: center; background: linear-gradient(#b4b4c2, #9292a2); border-right: 1px solid #5f5f6b; white-space: nowrap; }
    .slider input { appearance: none; flex: 1; min-width: 0; margin: 0 4px 0 2px; height: 10px; background: repeating-linear-gradient(90deg, #bdbdc0 0 1px, transparent 1px 7px) 0 50% / 48px 1px no-repeat; }
    .slider input::-webkit-slider-thumb { appearance: none; width: 4px; height: 4px; border: 1px solid #222; background: #fff; transform: rotate(45deg); }
    .slider output { position: absolute; right: 12px; }
  `];
  render() {
    return html`
      <svg class="wires" aria-hidden="true">
        ${wires.map(w => svg`<path class=${w[4] ? "outer list" : "outer"} d=${wirePath(w)}></path>${w[4] ? svg`<path class="inner" d=${wirePath(w)}></path>` : nothing}`)}
      </svg>
      ${nodes.map(n => html`<graph-node class="item" .node=${n} style="left:${n.x}px;top:${n.y - PAN_Y}px;width:${n.w}px;height:${n.h}px"></graph-node>`)}
      ${notes.map(n => html`<div class="item dots" style="left:${n.x}px;top:${n.y - PAN_Y}px;width:${n.w}px;height:${n.h}px">
        <div class="note"><div class="title">调试面板</div><div class="value">${n.v}</div></div>
      </div>`)}
      <div class="item dots" style="left:512px;top:${329 - PAN_Y}px">
        <div class="slider">
          <label for="num">数字滑块</label>
          <input id="num" type="range" min="0" max="1" value="1">
          <output for="num">1</output>
        </div>
      </div>`;
  }
}

@customElement("app-root")
export class AppRoot extends LitElement {
  static styles = css`
    :host { display: flex; flex-direction: column; height: 100vh; overflow: hidden; font: 7px/10px "Open Sans", "Noto Sans CJK SC", sans-serif; color: #1b1b1b; background: #fbf9fd; }
    graph-canvas { flex: 1; min-height: 0; }
  `;
  render() {
    return html`<menu-bar></menu-bar><tool-ribbon></tool-ribbon><canvas-toolbar></canvas-toolbar><graph-canvas></graph-canvas>`;
  }
}
